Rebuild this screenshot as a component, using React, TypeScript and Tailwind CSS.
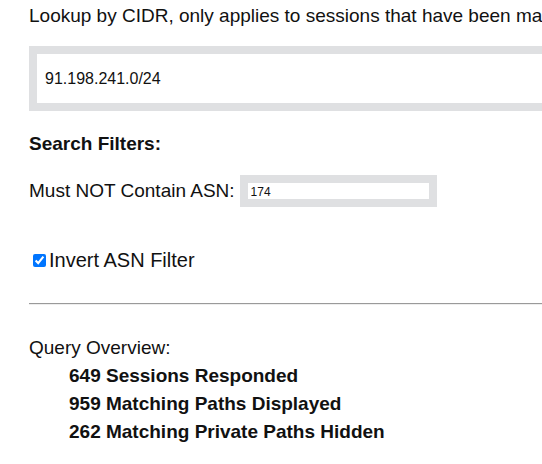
import React from "react";

export default function App() {
  return (
    <div className="w-[542px] h-[464px] overflow-hidden bg-white text-[#111111] [font-family:'Liberation_Sans',Arial,sans-serif]">
      <div className="w-[900px] pl-[29px] pt-[5px]">
        <div className="text-[19px] leading-[22px] whitespace-nowrap">
          Lookup by CIDR, only applies to sessions that have been marked as public
        </div>

        <div className="mt-[19px] w-[700px] h-[65px] border-[8px] border-[#dfe0e2] bg-white flex items-center pl-[8px]">
          <input
            type="text"
            defaultValue="91.198.241.0/24"
            className="w-full h-full bg-white outline-none text-[16px] text-[#111111] [font-family:'Liberation_Sans',Arial,sans-serif]"
          />
        </div>

        <div className="mt-[22px] text-[19px] leading-[22px] font-bold">Search Filters:</div>

        <div className="mt-[20px] flex items-center h-[32px]">
          <span className="text-[19px] leading-[22px]">Must NOT Contain ASN:</span>
          <div className="ml-[5px] w-[197px] h-[32px] border-[8px] border-[#dfe0e2] bg-white flex items-center">
            <input
              type="text"
              defaultValue="174"
              className="w-full h-[16px] pl-[3px] pt-[1px] bg-white outline-none text-[12px] leading-[14px] text-[#111111] [font-family:'Liberation_Sans',Arial,sans-serif]"
            />
          </div>
        </div>

        <label className="mt-[42px] flex items-center h-[23px]">
          <input
            type="checkbox"
            defaultChecked
            className="ml-[4px] mr-[3px] w-[13px] h-[13px] accent-[#0075ff]"
          />
          <span className="text-[20px] leading-[23px]">Invert ASN Filter</span>
        </label>

        <div className="mt-[31px] h-0 border-t border-b border-t-[#9a9a9a] border-b-[#eeeeee]" />

        <div className="mt-[32px] text-[19px] leading-[22px]">Query Overview:</div>
        <div className="mt-[2.5px] pl-[40px] font-bold text-[19px] leading-[28px]">
          <div>649 Sessions Responded</div>
          <div>959 Matching Paths Displayed</div>
          <div>262 Matching Private Paths Hidden</div>
        </div>
      </div>
    </div>
  );
}
